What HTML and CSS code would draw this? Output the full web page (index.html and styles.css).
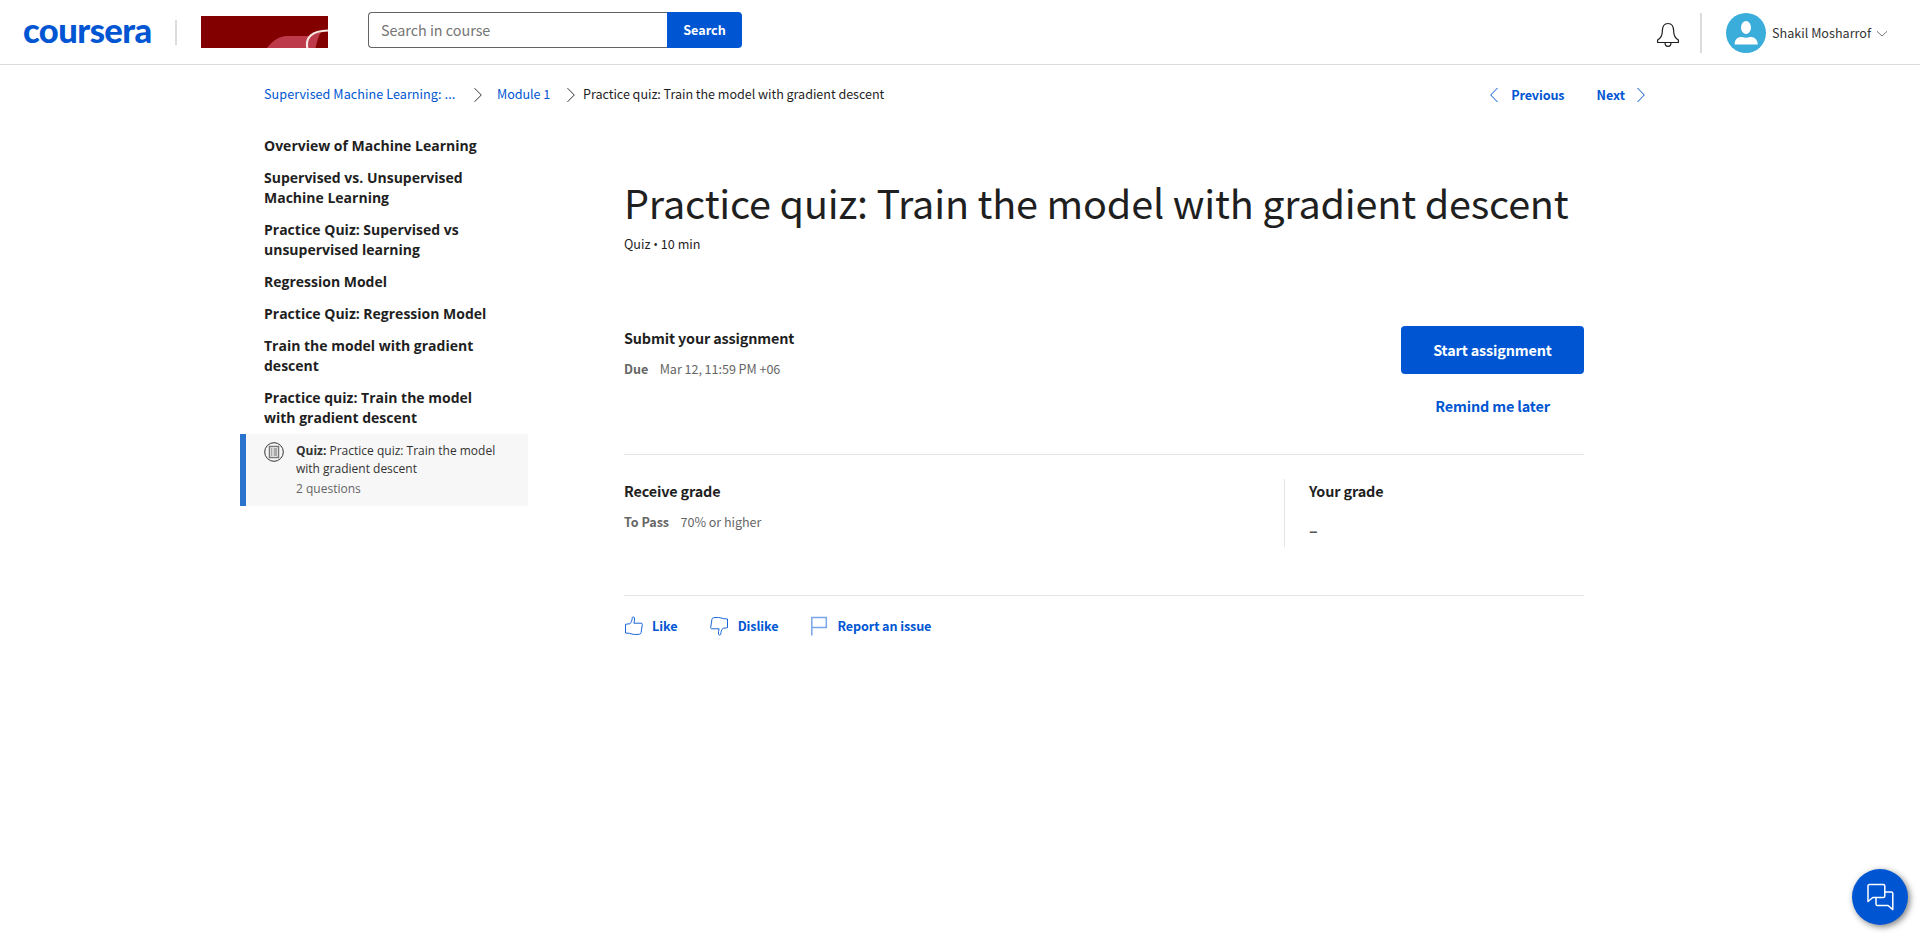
FILE: index.html
```html
<!DOCTYPE html>
<html lang="en">
<head>
<meta charset="utf-8">
<title>Practice quiz: Train the model with gradient descent</title>
<link rel="stylesheet" href="styles.css">
</head>
<body>
<header class="header">
  <a class="logo"><span class="logo-text">coursera</span></a>
  <span class="logo-divider"></span>
  <svg class="partner" width="127" height="32" viewBox="0 0 127 32"><rect width="127" height="32" fill="#820000"/><path d="M66 32C71 25 78 20 86 20h22v12z" fill="#bd3a4b"/><path d="M107 32c-2-10 3-17 20-17.500V32z" fill="#820000"/><path d="M107 32c-1.500-9 3-15 13-16-3 5-4 10-5.500 16z" fill="#bd3a4b"/><path d="M106.500 33c-2.500-11.500 4-18.300 21-18.500" fill="none" stroke="#f6e6e2" stroke-width="2.200"/></svg>
  <form class="search">
    <div class="search-field">Search in course</div>
    <div class="search-button">Search</div>
  </form>
  <div class="account">
    <svg class="bell" width="24" height="26" viewBox="0 0 24 26" fill="none" stroke="#1f1f1f" stroke-width="1.200"><path d="M1.600 20.500v-2.500c3-1.700 4.700-4.500 4.700-8.500 0-5 1.900-8 5.700-8s5.700 3 5.700 8c0 4 1.700 6.800 4.700 8.500v2.500z"/><path d="M9 20.700c0 2.400 1.200 3.600 3 3.600s3-1.200 3-3.600"/></svg>
    <span class="account-divider"></span>
    <svg class="avatar" width="40" height="40" viewBox="0 0 40 40"><circle cx="20" cy="20" r="20" fill="#3badda"/><ellipse cx="20" cy="14.500" rx="5" ry="6.500" fill="#fff"/><path d="M8.700 31.500c0-5 2.300-7.500 7.300-7.500 2.600 1.100 5.400 1.100 8 0 5 0 7.500 2.500 7.800 7.500z" fill="#fff"/></svg>
    <span class="user">Shakil Mosharrof</span>
    <svg class="caret" width="12" height="8" viewBox="0 0 12 8" fill="none" stroke="#777"><path d="M1 1.300l5 4.700 5-4.700"/></svg>
  </div>
</header>

<nav class="crumbs">
  <a class="crumb crumb-course">Supervised Machine Learning: <span class="dots">…</span></a>
  <svg class="sep" width="8" height="16" viewBox="0 0 8 16" fill="none" stroke="#333"><path d="M.5 1.200L7.300 8 .5 14.800"/></svg>
  <a class="crumb crumb-module">Module 1</a>
  <svg class="sep" width="8" height="16" viewBox="0 0 8 16" fill="none" stroke="#333"><path d="M.5 1.200L7.300 8 .5 14.800"/></svg>
  <span class="crumb crumb-here">Practice quiz: Train the model with gradient descent</span>
  <div class="pager">
    <svg width="8" height="16" viewBox="0 0 8 16" fill="none" stroke="#0056d2"><path d="M7.500 1L.7 8l6.800 7"/></svg>
    <a class="prev">Previous</a>
    <a class="next">Next</a>
    <svg width="8" height="16" viewBox="0 0 8 16" fill="none" stroke="#0056d2"><path d="M.5 1L7.300 8 .5 15"/></svg>
  </div>
</nav>

<div class="page">
  <aside class="sidebar">
    <ul class="lessons">
      <li>Overview of Machine Learning</li>
      <li>Supervised vs. Unsupervised<br>Machine Learning</li>
      <li>Practice Quiz: Supervised vs<br>unsupervised learning</li>
      <li>Regression Model</li>
      <li>Practice Quiz: Regression Model</li>
      <li>Train the model with gradient<br>descent</li>
      <li>Practice quiz: Train the model<br>with gradient descent</li>
    </ul>
    <a class="current">
      <svg width="20" height="20" viewBox="0 0 20 20"><circle cx="10" cy="10" r="9.300" fill="none" stroke="#333"/><rect x="5.500" y="4.500" width="9" height="11" fill="#fff" stroke="#777" stroke-width="1.500"/><path d="M7 7h1.500M7 9h1.500M7 11h1.500M7 13h1.500M9.500 7H13M9.500 9H13M9.500 11H13M9.500 13H13" stroke="#555"/></svg>
      <div class="current-text">
        <div><b>Quiz:</b> Practice quiz: Train the model</div>
        <div>with gradient descent</div>
        <div class="count">2 questions</div>
      </div>
    </a>
  </aside>

  <main class="main">
    <h1 class="title">Practice quiz: Train the model with gradient descent</h1>
    <div class="meta">Quiz <span class="bullet">•</span> 10 min</div>

    <section class="submit">
      <div>
        <h2 class="heading">Submit your assignment</h2>
        <div class="detail"><b>Due</b><span>Mar 12, 11:59 PM +06</span></div>
      </div>
      <div class="actions">
        <a class="start">Start assignment</a>
        <a class="remind">Remind me later</a>
      </div>
    </section>

    <section class="grade">
      <div>
        <h2 class="heading">Receive grade</h2>
        <div class="detail"><b>To Pass</b><span>70% or higher</span></div>
      </div>
      <div class="your-grade">
        <h2 class="heading">Your grade</h2>
        <div class="dash">–</div>
      </div>
    </section>

    <div class="feedback">
      <a class="like"><svg width="20" height="20" viewBox="0 0 20 20" fill="none" stroke="#0056d2" stroke-width=".9"><path d="M1.500 8.300l4.300-.6C7.600 6.700 8 4 8.300 1.600c.3-1.100 2-.8 2.200.3.200 1.800-.1 3.500-.6 5.300h7.200c.8 0 1.300.5 1.200 1.300l-1.200 8c-.1.900-.6 1.500-1.500 1.700-3.700.6-6.700.4-9.800-.8L1.500 17z"/></svg>Like</a>
      <a class="dislike"><svg width="20" height="20" viewBox="0 0 20 20" fill="none" stroke="#0056d2" stroke-width=".9"><path d="M18.500 11.700l-4.300.6c-1.800 1-2.200 3.700-2.500 6.100-.3 1.100-2 .8-2.200-.3-.2-1.800.1-3.500.6-5.300H2.900c-.8 0-1.300-.5-1.200-1.300l1.200-8c.1-.9.600-1.500 1.500-1.700 3.700-.6 6.700-.4 9.800.8l4.300.4z"/></svg>Dislike</a>
      <a class="report"><svg width="18" height="20" viewBox="0 0 18 20" fill="none" stroke="#79a6e8" stroke-width="1.500"><path d="M1.800 19.500V1.500h14.500v10H1.800"/></svg>Report an issue</a>
    </div>
  </main>
</div>

<div class="chat">
  <svg width="28" height="28" viewBox="0 0 28 28" fill="none" stroke="#fff" stroke-width="1.500" stroke-linejoin="round"><path d="M3.500 1.500h13.700c1 0 1.600.6 1.600 1.600v9.800c0 1-.6 1.600-1.600 1.600H6.800L2 18.500V3.100c0-1 .5-1.600 1.500-1.600z"/><path d="M18.800 9h6.400c1 0 1.600.6 1.600 1.600v16l-4.700-4.100H11.600c-1 0-1.600-.6-1.600-1.600v-6.400"/></svg>
</div>
</body>
</html>
```
FILE: styles.css
```css
* { box-sizing: border-box; }
body { margin: 0; background: #fff; color: #1f1f1f; font: 12.6px/20px "Noto Sans CJK SC", sans-serif; overflow: hidden; }
svg { display: block; flex: none; }
h1, h2, ul { margin: 0; padding: 0; }
a { color: #0056d2; text-decoration: none; white-space: nowrap; }

.header { display: flex; height: 65px; border-bottom: 1px solid #dcdcdc; }
.logo { width: 151px; padding-left: 23px; }
.logo-text { display: block; font: 900 34.5px/60px Lato, sans-serif; color: #0056d2; letter-spacing: -.55px; }
.logo-divider { width: 2px; height: 25px; margin: 20px 24px 0; background: #dcdcdc; }
.partner { margin-top: 16px; }
.search { display: flex; margin: 12px 0 0 40px; height: 36px; }
.search-field { width: 299px; border: 1px solid #636363; border-right: 0; border-radius: 4px 0 0 4px; padding: 0 0 0 12px; font-size: 14.4px; line-height: 34px; letter-spacing: -.03px; color: #757575; }
.search-button { width: 75px; border-radius: 0 4px 4px 0; background: #0056d2; color: #fff; font-weight: 700; line-height: 36px; text-align: center; }
.account { display: flex; margin-left: auto; padding-top: 13px; }
.bell { margin: 9px 20px 0 0; }
.account-divider { width: 2px; height: 40px; background: #dcdcdc; margin-right: 24px; }
.user { line-height: 40px; margin-left: 6px; color: #333; white-space: nowrap; }
.caret { margin: 17px 32px 0 5px; }

.crumbs { display: flex; align-items: center; height: 60px; padding: 0 275px 0 264px; line-height: 20px; }
.crumb { margin-top: -2px; }
.sep { margin-top: -1px; }
.crumb-course { width: 210px; letter-spacing: .06px; }
.dots { font-family: "Open Sans", sans-serif; letter-spacing: 0; font-size: 14px; line-height: 1; }
.crumb-module { width: 54px; margin-left: 15px; margin-right: 16px; letter-spacing: -.06px; }
.crumb-here { margin-left: 8px; white-space: nowrap; letter-spacing: -.045px; }
.pager { display: flex; align-items: center; margin-left: auto; font-weight: 700; }
.prev { margin: -1px 32px 0 13px; letter-spacing: -.12px; }
.next { margin: -1px 12px 0 0; }

.page { display: flex; }
.sidebar { width: 288px; margin-left: 240px; padding-top: 11px; }
.lessons { display: flex; flex-direction: column; gap: 12px; padding-left: 24px; list-style: none; font: 700 14px/20px "Open Sans", sans-serif; white-space: nowrap; }
.current { display: flex; margin-top: 6px; height: 72px; padding: 8px 0 0 18px; border-left: 6px solid #2a73cc; background: #f7f7f7; color: #333; font: 12px/18px "Open Sans", sans-serif; }
.current-text { margin-left: 12px; }
.count { margin-top: 2px; color: #666; }

.main { width: 960px; margin-left: 96px; padding-top: 49px; }
.title { font-size: 39.6px; line-height: 56px; font-weight: 400; white-space: nowrap; letter-spacing: -.185px; }
.meta { margin-top: 4px; }
.bullet { font-family: "Open Sans", sans-serif; }
.submit { display: flex; justify-content: space-between; margin-top: 71px; padding-bottom: 24px; border-bottom: 1px solid #e5e5e5; }
.heading { font-size: 14.4px; line-height: 24px; font-weight: 700; letter-spacing: -.14px; }
.detail { display: flex; gap: 11.5px; margin-top: 9px; color: #666; letter-spacing: -.05px; }
.actions { display: flex; flex-direction: column; width: 183px; font-size: 14.4px; font-weight: 700; line-height: 48px; text-align: center; letter-spacing: -.14px; }
.start { background: #0056d2; color: #fff; border-radius: 4px; }
.remind { margin-top: 8px; }
.grade { display: flex; justify-content: space-between; padding: 24px 0 48px; border-bottom: 1px solid #e5e5e5; }
.your-grade { width: 300px; height: 68px; border-left: 1px solid #e5e5e5; padding-left: 24px; }
.dash { margin-top: 15px; font-size: 16px; font-weight: 700; line-height: 24px; color: #555; }
.feedback { display: flex; margin-top: 20px; font-weight: 700; }
.feedback a { display: flex; gap: 8px; }
.feedback .dislike { margin-left: 31px; gap: 9px; letter-spacing: -.1px; }
.report { margin-left: 32px; }
.feedback .report { gap: 9px; letter-spacing: -.1px; }

.chat { position: fixed; left: 1852px; top: 869px; width: 56px; height: 56px; border-radius: 50%; background: #0056d2; box-shadow: 2px 2px 6px rgba(0,0,0,.5); display: flex; align-items: center; justify-content: center; }
```
